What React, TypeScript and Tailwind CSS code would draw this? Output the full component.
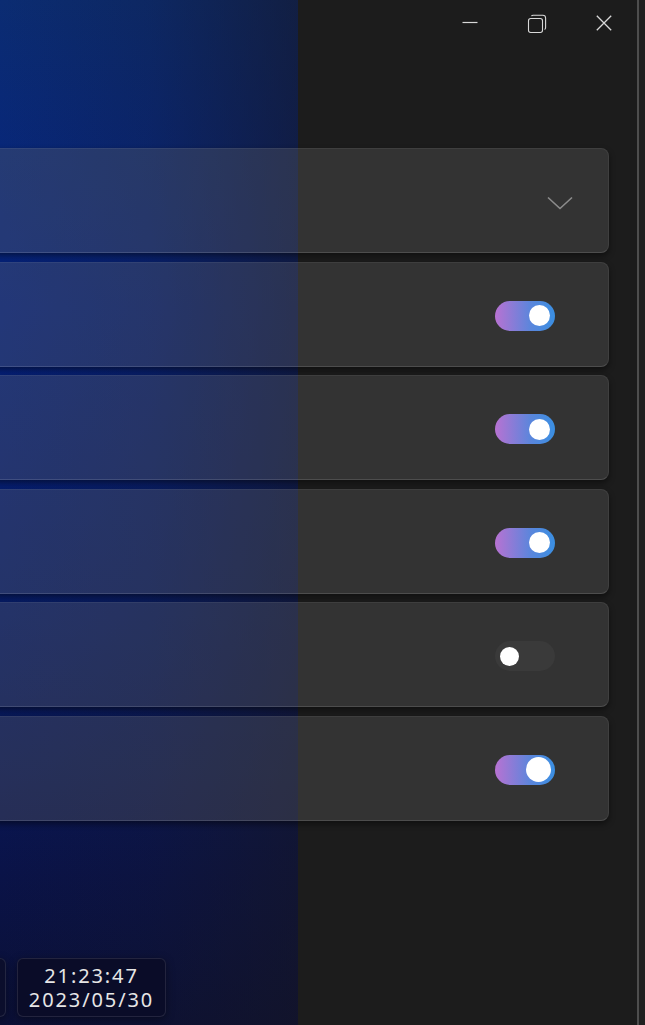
import React from "react";

const cards = [
    { kind: "select" },
    { kind: "toggle", on: true },
    { kind: "toggle", on: true },
    { kind: "toggle", on: true },
    { kind: "toggle", on: false },
    { kind: "toggle", on: true, hover: true },
];

function Toggle({ on, hover }: { on: boolean; hover?: boolean }) {
    if (!on) {
        return (
            <div className="w-[60px] h-[30px] rounded-full bg-[#3a3a3a] flex items-center pl-[5px]">
                <div className="w-[19px] h-[19px] rounded-full bg-white" />
            </div>
        );
    }
    return (
        <div className="w-[60px] h-[30px] rounded-full bg-[linear-gradient(90deg,#b872d2,#5a86dc_60%,#3a8fe2)] flex items-center justify-end pr-[4px]">
            <div className={hover ? "w-[25px] h-[25px] rounded-full bg-white" : "w-[21px] h-[21px] rounded-full bg-white mr-[1px]"} />
        </div>
    );
}

function Chevron() {
    return (
        <svg width="28" height="16" viewBox="0 0 28 16" fill="none">
            <path d="M2 2.5 L14 13.5 L26 2.5" stroke="#8c8c8c" strokeWidth="1.6" />
        </svg>
    );
}

export default function App() {
    return (
        <div className="flex w-[645px] h-[1025px] overflow-hidden" style={{ fontFamily: '"Noto Sans", "Open Sans", sans-serif' }}>
            <div className="relative w-[637px] h-full flex flex-col bg-[#1c1c1c] bg-[image:linear-gradient(90deg,rgba(22,22,36,0)_0%,rgba(22,22,36,0.2)_50%,rgba(22,22,36,0.6)_100%),linear-gradient(180deg,#0b2c72_0%,#05227f_30%,#071c68_60%,#0a1348_85%,#0b1036_100%)] bg-[length:298px_100%] bg-no-repeat">
                {/* title bar */}
                <div className="h-[46px] flex justify-end">
                    <button className="w-[67px] h-full flex items-center justify-center">
                        <svg width="16" height="16" viewBox="0 0 16 16"><path d="M0.5 7.5 H15.5" stroke="#d8d8d8" strokeWidth="1.2" /></svg>
                    </button>
                    <button className="w-[67px] h-full flex items-center justify-center pt-[2px]">
                        <svg width="20" height="20" viewBox="0 0 20 20" fill="none">
                            <rect x="1.5" y="4.5" width="14" height="14" rx="2.2" stroke="#d8d8d8" strokeWidth="1.1" />
                            <path d="M4.5 2.2 Q4.8 1.3 6.3 1.3 H15.8 Q18.6 1.3 18.6 4.1 V13.6 Q18.6 15.1 17.6 15.5" stroke="#d8d8d8" strokeWidth="1.1" />
                        </svg>
                    </button>
                    <button className="w-[67px] h-full flex items-center justify-center">
                        <svg width="16" height="16" viewBox="0 0 16 16" fill="none">
                            <path d="M0.8 0.8 L15.2 15.2 M15.2 0.8 L0.8 15.2" stroke="#d8d8d8" strokeWidth="1.3" />
                        </svg>
                    </button>
                </div>

                {/* cards */}
                <div className="mt-[102px] flex flex-col gap-[8.6px] -ml-[10px] w-[619px]">
                    {cards.map((c, i) => (
                        <div
                            key={i}
                            className="h-[105px] rounded-lg bg-[rgba(105,105,105,0.3)] border border-white/[0.06] border-b-white/[0.13] shadow-[0_3px_6px_rgba(0,0,0,0.45)] flex items-center justify-end pr-[53px]"
                        >
                            {c.kind === "select" ? (
                                <div className="mr-[-19px] mt-[4px]"><Chevron /></div>
                            ) : (
                                <div className="mt-[3px]"><Toggle on={!!c.on} hover={c.hover} /></div>
                            )}
                        </div>
                    ))}
                </div>

                <div className="flex-1" />

                {/* bottom clock */}
                <div className="flex gap-[11px] -ml-[56px] mb-[8px]">
                    <div className="w-[62px] h-[59px] rounded-md bg-[#0b0e2c] border border-white/[0.1] shadow-[0_2px_8px_rgba(0,0,0,0.4)]" />
                    <div className="w-[149px] h-[59px] rounded-md bg-[#0a0c28] border border-white/[0.1] shadow-[0_2px_8px_rgba(0,0,0,0.4)] flex flex-col items-center justify-center text-[#e6e6e6] text-[20px] leading-[24px] tracking-[1.9px]">
                        <span className="block">21:23:47</span>
                        <span className="block">2023/05/30</span>
                    </div>
                </div>
            </div>
            <div className="w-[2px] h-full bg-[#4e4e4e]" />
            <div className="flex-1 h-full bg-[#202020]" />
        </div>
    );
}
